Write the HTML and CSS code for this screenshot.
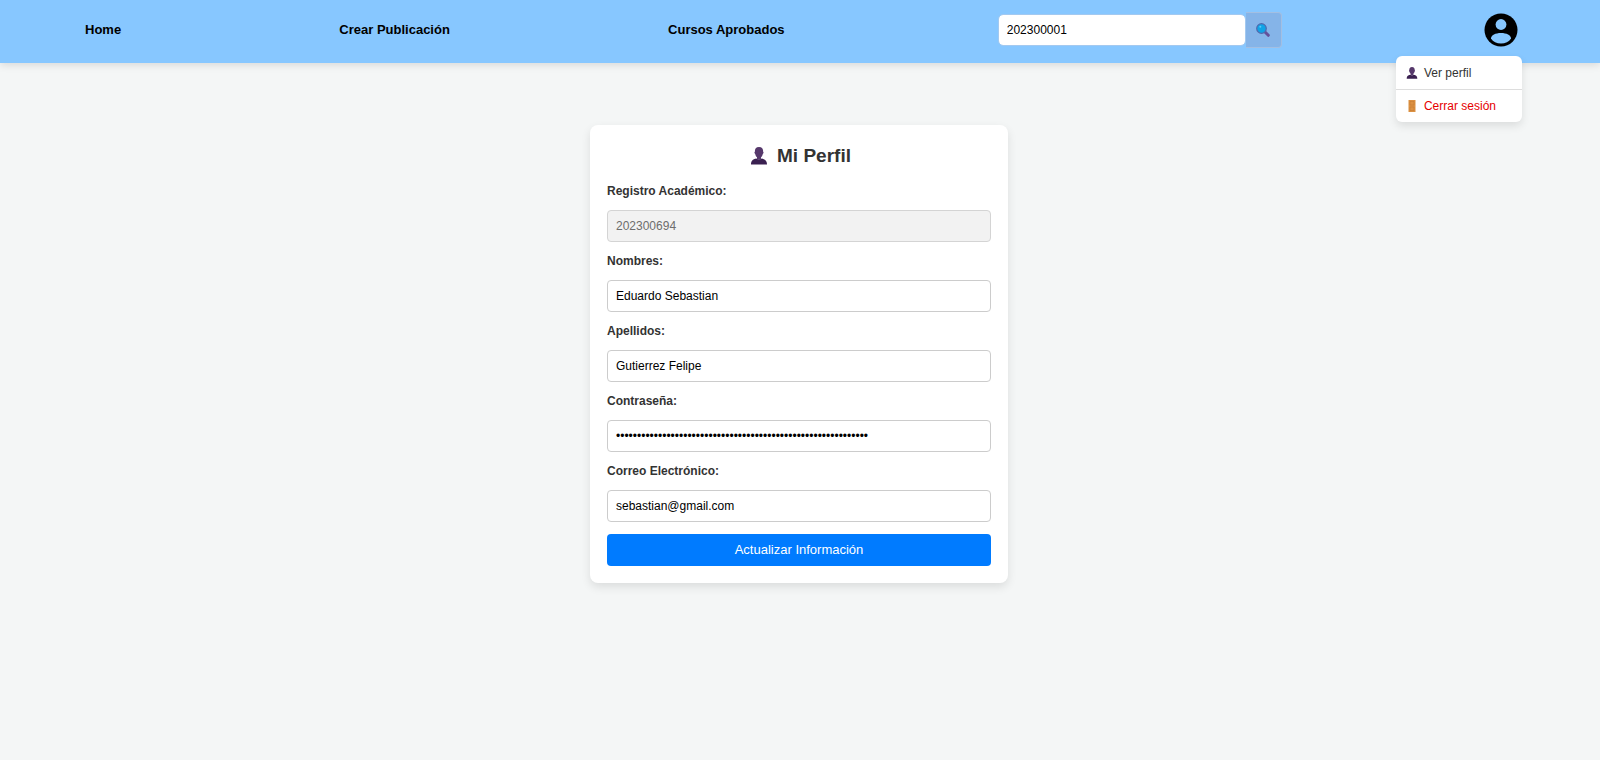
FILE: index.html
```html
<!DOCTYPE html>
<html lang="es">
<head>
<meta charset="utf-8">
<title>Mi Perfil</title>
<link rel="stylesheet" href="styles.css">
</head>
<body>
<svg class="sprite" aria-hidden="true">
  <symbol id="bust" viewBox="0 0 16 18">
    <path fill="#56386b" d="M8 0C5 0 3.700 2 3.900 4.800 3.300 4.800 3.200 6.300 4.200 7 4.500 8.500 5.200 9.600 6 10.200V12.500h4V10.200C10.800 9.600 11.500 8.500 11.800 7 12.800 6.300 12.700 4.800 12.100 4.800 12.300 2 11 0 8 0z"/>
    <path fill="#3a2050" d="M0 17.500c0-3.500 1.500-5 5.500-5.900 1 1.200 4 1.200 5 0 4 .9 5.500 2.400 5.500 5.900z"/>
  </symbol>
</svg>
<header class="navbar">
  <nav class="nav">
    <a class="nav-link" href="#">Home</a>
    <a class="nav-link" href="#">Crear Publicación</a>
    <a class="nav-link" href="#">Cursos Aprobados</a>
    <form class="search">
      <input class="search-input" type="text" value="202300001" aria-label="Buscar por registro">
      <button class="search-button" type="button" aria-label="Buscar">
        <svg class="search-icon" viewBox="0 0 14 14">
          <path d="M8.500 8.500l3.800 3.800" stroke="#64509a" stroke-width="3" stroke-linecap="round"/>
          <circle cx="5.500" cy="5.500" r="4.800" fill="#0fa3e6" stroke="#5268ad" stroke-width="1.200"/>
          <circle cx="4.300" cy="3.800" r="1" fill="#5cc8f7"/>
        </svg>
      </button>
    </form>
    <div class="account">
      <button class="avatar" type="button" aria-label="Cuenta">
        <svg class="avatar-icon" viewBox="0 0 34 34">
          <circle cx="17" cy="17" r="16.500" fill="#000"/>
          <circle cx="17" cy="11.500" r="5.400" fill="#87c7ff"/>
          <path fill="#87c7ff" d="M7 25.500c0-3.400 4.500-5.500 10-5.500s10 2.100 10 5.500c-2 3.300-5.700 5-10 5s-8-1.700-10-5z"/>
        </svg>
      </button>
      <div class="menu">
        <a class="menu-item" href="#"><svg class="menu-icon" viewBox="0 0 12 12"><use href="#bust"/></svg>Ver perfil</a>
        <a class="menu-item menu-exit" href="#"><svg class="menu-icon" viewBox="0 0 12 12"><path fill="#dc9142" d="M2.500 0h7v12h-7z"/><path fill="none" stroke="#c67c34" stroke-width=".6" d="M4 1.500h4v3.500H4zM4 7h4v3.500H4z"/></svg>Cerrar sesión</a>
      </div>
    </div>
  </nav>
</header>
<main class="page">
  <form class="card">
    <h1 class="title"><svg class="title-icon" viewBox="0 0 16 18"><use href="#bust"/></svg>Mi Perfil</h1>
    <label class="label" for="registro">Registro Académico:</label>
    <input class="field" id="registro" type="text" value="202300694" disabled>
    <label class="label" for="nombres">Nombres:</label>
    <input class="field" id="nombres" type="text" value="Eduardo Sebastian">
    <label class="label" for="apellidos">Apellidos:</label>
    <input class="field" id="apellidos" type="text" value="Gutierrez Felipe">
    <label class="label" for="clave">Contraseña:</label>
    <input class="field" id="clave" type="password" value="012345678901234567890123456789012345678901234567890123456789">
    <label class="label" for="correo">Correo Electrónico:</label>
    <input class="field" id="correo" type="email" value="sebastian@gmail.com">
    <button class="submit" type="button">Actualizar Información</button>
  </form>
</main>
</body>
</html>
```
FILE: styles.css
```css
* { box-sizing: border-box; }

body {
  margin: 0;
  background: #f4f6f6;
  font: 12px/16px "Liberation Sans", Arial, sans-serif;
  color: #333;
}

.sprite { position: absolute; width: 0; height: 0; }

input, button { font: inherit; }

.navbar {
  background: #87c7ff;
  box-shadow: 0 2px 8px rgba(0, 0, 0, 0.12);
  padding: 12px 80px 15px;
}

.nav {
  display: flex;
  justify-content: space-between;
  align-items: center;
}

.nav-link {
  padding: 0 11px 0 5px;
  font-size: 13px;
  font-weight: bold;
  color: #000;
  text-decoration: none;
}

.search { display: flex; align-items: center; }

.search-input {
  width: 248px;
  height: 32px;
  padding: 0 8px;
  border: 1px solid #a3c9f0;
  border-radius: 5px;
  background: #fff;
  background-clip: padding-box;
  color: #000;
}

.search-button {
  display: grid;
  place-items: center;
  width: 36px;
  height: 36px;
  padding: 0;
  border: 1px solid #a3bfe2;
  border-left: 0;
  border-radius: 0 4px 4px 0;
  background: #85b4e8;
}

.search-icon { width: 14px; height: 14px; }

.account { position: relative; padding-right: 2px; }

.avatar {
  display: block;
  padding: 0;
  border: 0;
  background: none;
}

.avatar-icon { display: block; width: 34px; height: 34px; }

.menu {
  position: absolute;
  top: 43px;
  right: -2px;
  width: 126px;
  overflow: hidden;
  border-radius: 6px;
  background: #fff;
  box-shadow: 0 4px 8px rgba(0, 0, 0, 0.1);
}

.menu-item {
  display: flex;
  align-items: center;
  gap: 6px;
  height: 33px;
  padding: 0 10px;
  color: #333;
  text-decoration: none;
}

.menu-exit { border-top: 1px solid #ddd; color: #e60000; }

.menu-icon { width: 12px; height: 12px; }

.page {
  display: flex;
  justify-content: center;
  padding: 62px 2px 20px 0;
}

.card {
  display: flex;
  flex-direction: column;
  width: 100%;
  max-width: 418px;
  padding: 17px;
  border-radius: 8px;
  background: #fff;
  box-shadow: 0 4px 10px rgba(0, 0, 0, 0.1);
}

.title {
  display: flex;
  justify-content: center;
  align-items: center;
  gap: 10px;
  margin: 0 0 13px;
  padding-left: 4px;
  font-size: 19px;
  line-height: 28px;
}

.title-icon { width: 16px; height: 18px; }

.label { margin: 0 0 11px; font-weight: bold; }

.field {
  height: 32px;
  margin: 0 0 11px;
  padding: 0 8px;
  border: 1px solid #ccc;
  border-radius: 4px;
  background: #fff;
  color: #000;
}

.field:disabled { background: #f2f2f2; border-color: #d4d4d4; color: #6d6d6d; }

.submit {
  height: 32px;
  margin-top: 1px;
  padding: 0;
  border: 0;
  border-radius: 4px;
  background: #007bff;
  color: #fff;
  font-size: 13px;
}
```
